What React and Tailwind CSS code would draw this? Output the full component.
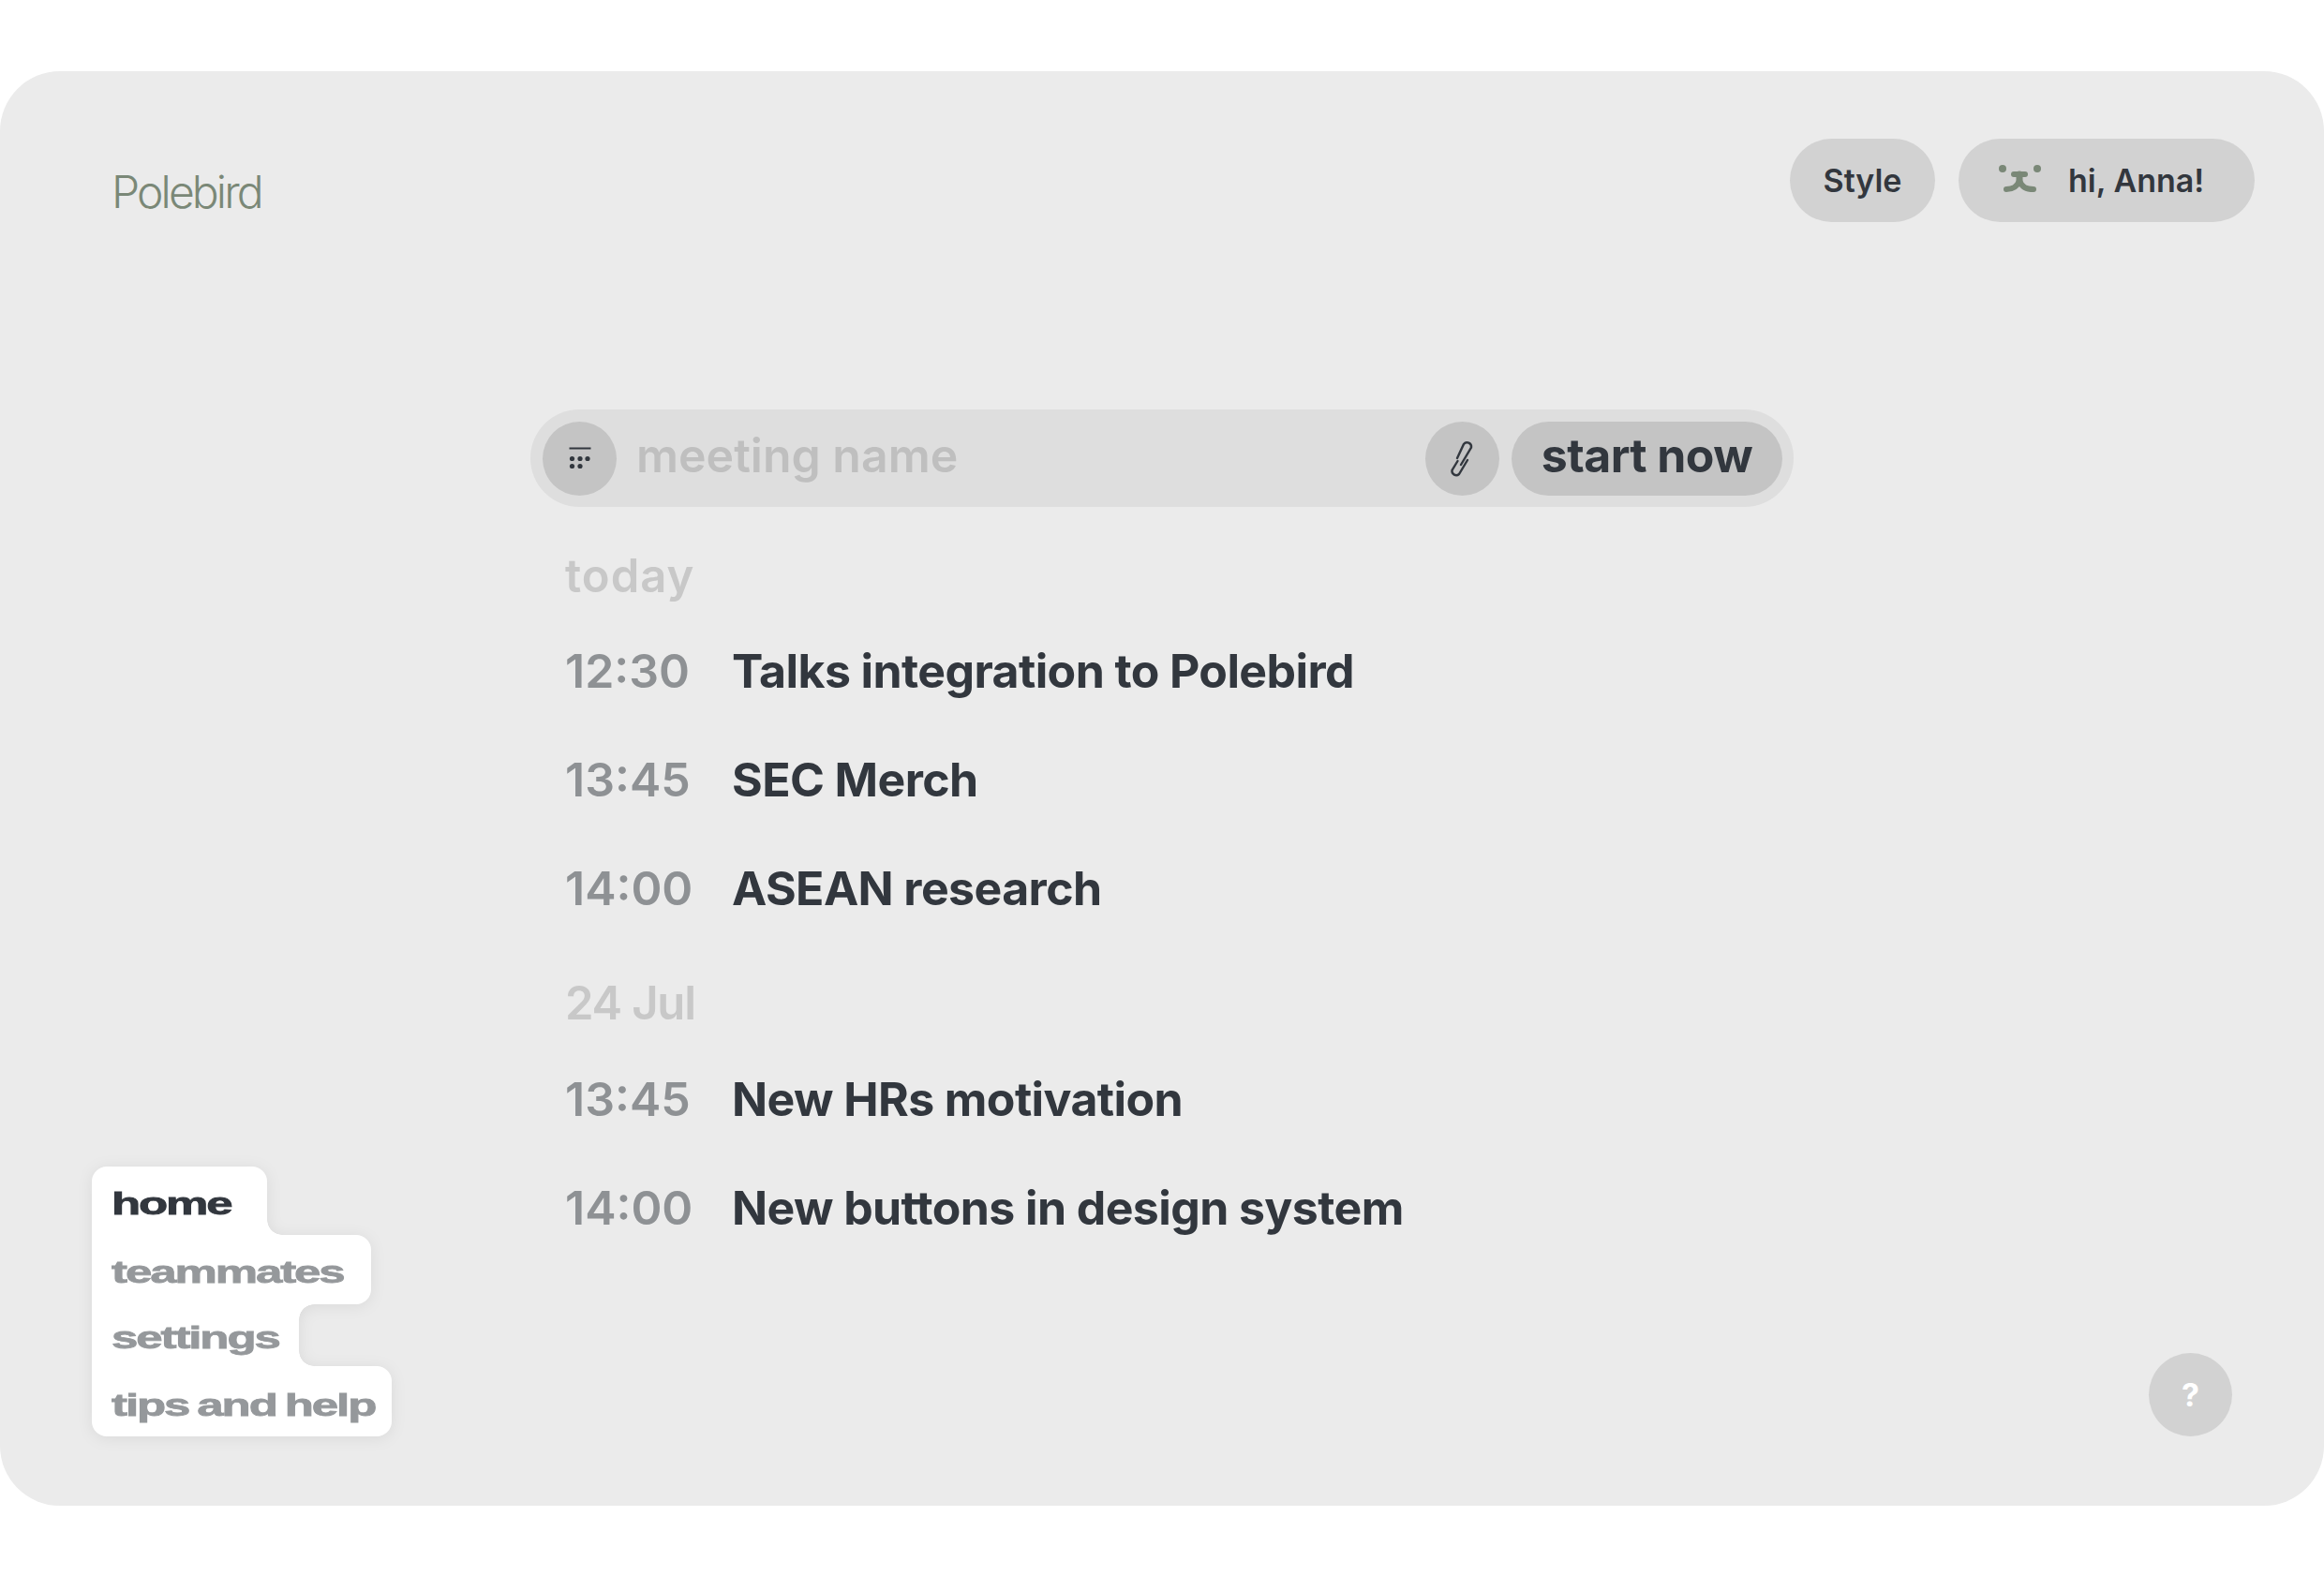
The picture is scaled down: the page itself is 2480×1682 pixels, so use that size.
import React from "react";

const TODAY = [
  { time: "12:30", title: "Talks integration to Polebird" },
  { time: "13:45", title: "SEC Merch" },
  { time: "14:00", title: "ASEAN research" },
];

const LATER = [
  { time: "13:45", title: "New HRs motivation" },
  { time: "14:00", title: "New buttons in design system" },
];

const BearFace = () => (
  <svg width="50" height="40" viewBox="0 0 50 40" fill="none" stroke="#7a8877" strokeLinecap="round">
    <circle cx="7" cy="7" r="4" fill="#7a8877" stroke="none" />
    <circle cx="44" cy="7" r="4" fill="#7a8877" stroke="none" />
    <path d="M19 13H31" strokeWidth="6" />
    <path d="M25 13V20" strokeWidth="7" />
    <path d="M11 29C18 29 22 27 25 20C28 27 32 29 40 29" strokeWidth="6" />
  </svg>
);

const FilterIcon = () => (
  <svg className="mb-[3px]" width="28" height="28" viewBox="0 0 28 28" fill="#32373e">
    <rect x="2.5" y="3.5" width="23" height="2" />
    <circle cx="5.5" cy="15.5" r="2.6" />
    <circle cx="14" cy="15.5" r="2.6" />
    <circle cx="22" cy="15.5" r="2.6" />
    <circle cx="5.5" cy="23.5" r="2.6" />
    <circle cx="14" cy="23.5" r="2.6" />
  </svg>
);

const ClipIcon = () => (
  <svg className="mr-[2px] mb-[3px]" width="30" height="46" viewBox="0 0 30 46" fill="none" stroke="#32373e" strokeWidth="2.4" strokeLinecap="round">
    <path d="M10 24L17 9A4.5 4.5 0 0 1 25 12.5L14 31" />
    <path d="M21 26L12 41A4.5 4.5 0 0 1 4.5 37L10.5 27" />
  </svg>
);

const MeetingRow = ({ time, title }) => (
  <div className="flex h-[116px] items-center pl-[37px]">
    <span className="w-[178px] text-[50px] font-semibold text-[#8e9194]">{time}</span>
    <span className="text-[50px] font-bold tracking-[-0.012em] text-[#32373e]">{title}</span>
  </div>
);

const DayLabel = ({ children, className }) => (
  <div className={`flex h-[64px] items-center pl-[37px] text-[49px] font-semibold text-[#c8c8c8] ${className}`}>
    {children}
  </div>
);

const NavLabel = ({ children, active }) => (
  <span
    className={`origin-left scale-x-[1.5] font-['Liberation_Sans',sans-serif] text-[34px] leading-none font-bold tracking-[-1.4px] [word-spacing:-2px] whitespace-nowrap [-webkit-text-stroke:0.8px] ${
      active ? "text-[#32373e]" : "text-[#95989b]"
    }`}
  >
    {children}
  </span>
);

// white stepped menu, concave corners cut with transparent radial gradients
const SideNav = () => (
  <nav className="flex flex-col items-start drop-shadow-[0_2px_8px_rgba(0,0,0,0.07)]">
    <div className="relative flex h-[73px] w-[187px] items-end rounded-t-[16px] bg-white pb-[17px] pl-[21px]">
      <NavLabel active>home</NavLabel>
      <span className="absolute bottom-0 left-full h-[16px] w-[16px] bg-[radial-gradient(circle_at_100%_0,transparent_15.5px,white_16px)]" />
    </div>
    <div className="relative flex h-[74px] w-[298px] items-end rounded-r-[16px] bg-white pb-[18px] pl-[21px]">
      <NavLabel>teammates</NavLabel>
    </div>
    <div className="relative flex h-[66px] w-[221px] items-end bg-white pb-[14px] pl-[21px]">
      <NavLabel>settings</NavLabel>
      <span className="absolute top-0 left-full h-[16px] w-[16px] bg-[radial-gradient(circle_at_100%_100%,transparent_15.5px,white_16px)]" />
      <span className="absolute bottom-0 left-full h-[16px] w-[16px] bg-[radial-gradient(circle_at_100%_0,transparent_15.5px,white_16px)]" />
    </div>
    <div className="flex h-[75px] w-[320px] items-end rounded-tr-[16px] rounded-b-[16px] bg-white pb-[17px] pl-[21px]">
      <NavLabel>tips and help</NavLabel>
    </div>
  </nav>
);

export default function App() {
  return (
    <div className="min-h-[1682px] bg-white pt-[76px] font-['Inter',sans-serif]">
      <div className="flex h-[1531px] flex-col rounded-[64px] bg-[#ebebeb]">
        <header className="flex items-start justify-between pt-[72px] pr-[74px] pl-[119px]">
          <div className="mt-[25px] text-[48px] leading-[64px] font-light tracking-[-0.06em] text-[#7a8877]">Polebird</div>
          <div className="flex gap-[25px]">
            <div className="flex h-[89px] w-[155px] items-center justify-center rounded-full bg-[#d2d2d2] text-[34px] font-semibold text-[#32373e]">
              Style
            </div>
            <div className="flex h-[89px] w-[316px] items-center gap-[27px] rounded-full bg-[#d2d2d2] pl-[40px] text-[34px] font-semibold text-[#32373e]">
              <BearFace />
              <span>hi, Anna!</span>
            </div>
          </div>
        </header>

        <div className="flex flex-1">
          <aside className="flex w-[566px] flex-col justify-end pb-[74px] pl-[98px]">
            <SideNav />
          </aside>

          <main className="w-[1348px] pt-[200px]">
            <div className="flex h-[104px] items-center rounded-full bg-[#dedede] pr-[12px] pl-[13px]">
              <div className="flex h-[79px] w-[79px] items-center justify-center rounded-full bg-[#c4c4c4]">
                <FilterIcon />
              </div>
              <span className="ml-[21px] flex-1 pb-[5px] text-[50px] font-semibold text-[#bfbfbf]">meeting name</span>
              <div className="flex h-[79px] w-[79px] items-center justify-center rounded-full bg-[#c4c4c4]">
                <ClipIcon />
              </div>
              <div className="ml-[13px] flex h-[79px] w-[289px] items-center justify-center rounded-full bg-[#c4c4c4] pb-[5px] text-[50px] font-bold tracking-[-0.012em] text-[#32373e]">
                start now
              </div>
            </div>

            <DayLabel className="mt-[42px] mb-[11px] tracking-[1px]">today</DayLabel>
            {TODAY.map((m) => (
              <MeetingRow key={m.title} {...m} />
            ))}
            <DayLabel className="mt-[33px] mb-[12px] tracking-[-1.2px]">24 Jul</DayLabel>
            {LATER.map((m) => (
              <MeetingRow key={m.title} {...m} />
            ))}
          </main>

          <aside className="flex flex-1 items-end justify-end pr-[98px] pb-[74px]">
            <div className="flex h-[89px] w-[89px] items-center justify-center rounded-full bg-[#d2d2d2] text-[34px] font-bold text-white">
              ?
            </div>
          </aside>
        </div>
      </div>
    </div>
  );
}
